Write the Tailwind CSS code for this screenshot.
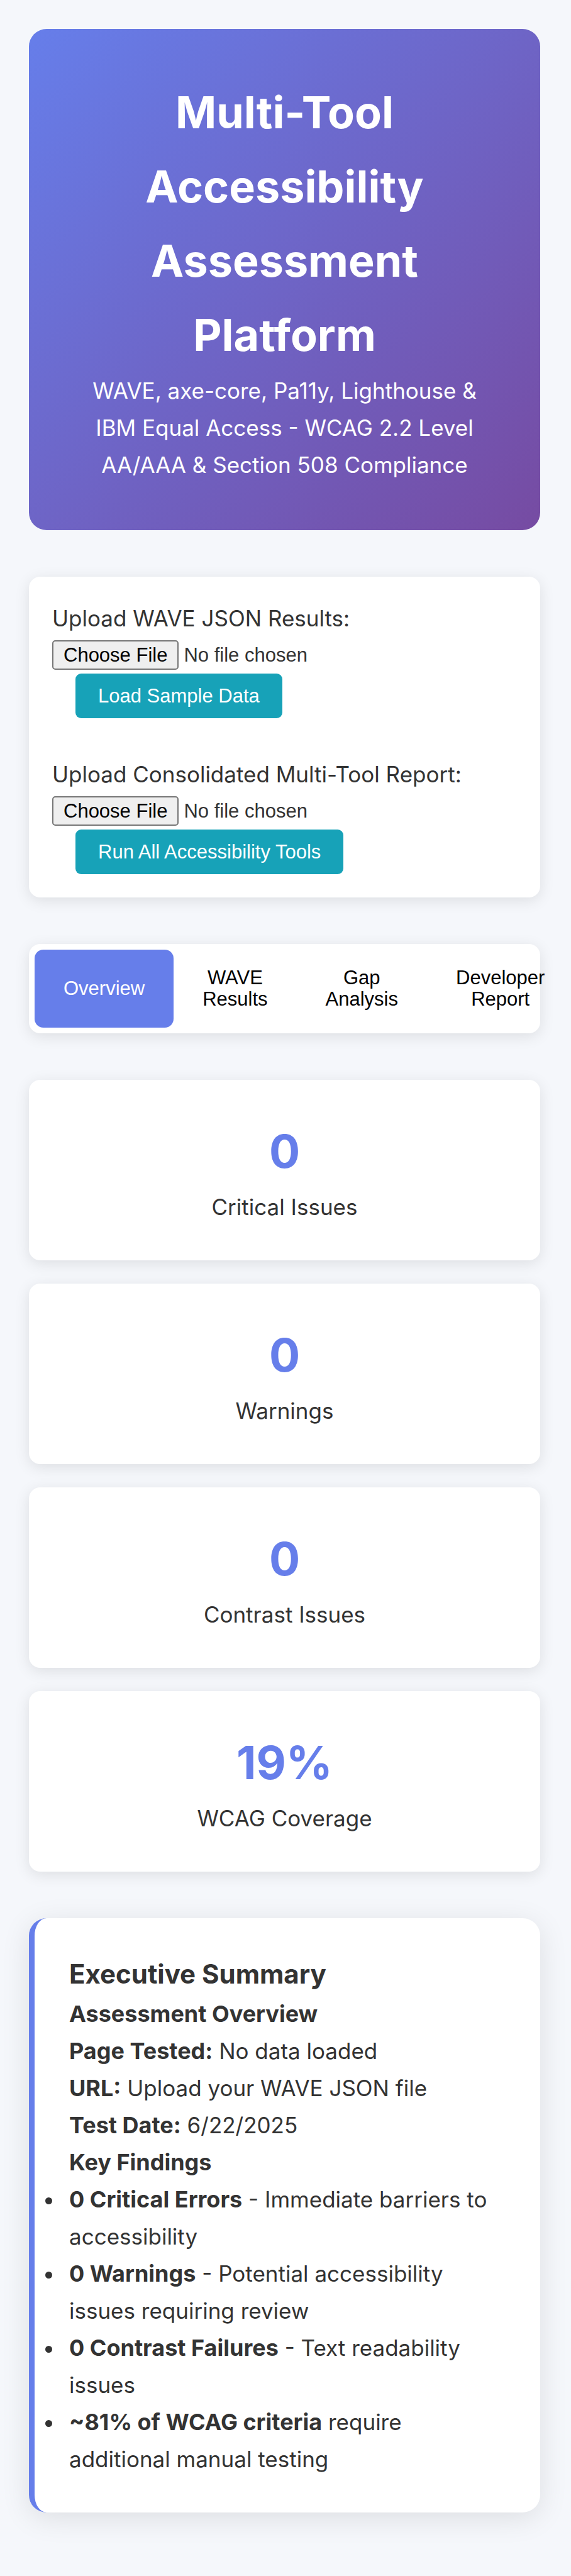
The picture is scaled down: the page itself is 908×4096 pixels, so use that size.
<!DOCTYPE html>
<html lang="en">
<head>
<meta charset="utf-8">
<meta name="viewport" content="width=device-width, initial-scale=1">
<title>Multi-Tool Accessibility Assessment Platform</title>
<script src="https://cdn.jsdelivr.net/npm/@tailwindcss/browser@4"></script>
</head>
<body class="overflow-x-clip bg-[#f5f7fb] font-['Inter','Liberation_Sans',sans-serif] text-[35px] leading-[59px] text-[#333]">
<div class="flex flex-col gap-[74px] pt-[46px] pr-[49px] pb-[99px] pl-[46px]">

  <header class="rounded-[28px] bg-[linear-gradient(135deg,#667eea_0%,#764ba2_100%)] p-[74px] text-center text-white">
    <h1 class="text-[70px] leading-[118px] font-bold">Multi-Tool Accessibility Assessment Platform</h1>
    <p>WAVE, axe-core, Pa11y, Lighthouse &amp; IBM Equal Access - WCAG 2.2 Level AA/AAA &amp; Section 508 Compliance</p>
  </header>

  <section class="flex flex-col gap-[60px] rounded-[18px] bg-white p-[37px] shadow-[0_5px_23px_rgba(0,0,0,0.1)]">
    <div class="flex flex-col items-start">
      <label for="wave-file">Upload WAVE JSON Results:</label>
      <input id="wave-file" type="file" class="mt-[5px] h-[47px] max-w-full font-['Liberation_Sans',sans-serif] text-[31px] leading-[35px] file:mr-[8px] file:h-[47px] file:rounded-[5px] file:border-2 file:border-solid file:border-[#767676] file:bg-[#efefef] file:px-[16px] file:text-black">
      <button type="button" class="mt-[6px] ml-[37px] rounded-[9px] bg-[#17a2b8] px-[36px] py-[18px] font-['Liberation_Sans',sans-serif] text-[31px] leading-[35px] text-white">Load Sample Data</button>
    </div>
    <div class="flex flex-col items-start">
      <label for="report-file">Upload Consolidated Multi-Tool Report:</label>
      <input id="report-file" type="file" class="mt-[5px] h-[47px] max-w-full font-['Liberation_Sans',sans-serif] text-[31px] leading-[35px] file:mr-[8px] file:h-[47px] file:rounded-[5px] file:border-2 file:border-solid file:border-[#767676] file:bg-[#efefef] file:px-[16px] file:text-black">
      <button type="button" class="mt-[6px] ml-[37px] rounded-[9px] bg-[#17a2b8] px-[36px] py-[18px] font-['Liberation_Sans',sans-serif] text-[31px] leading-[35px] text-white">Run All Accessibility Tools</button>
    </div>
  </section>

  <nav class="flex rounded-[18px] bg-white p-[9px] font-['Liberation_Sans',sans-serif] text-[31px] leading-[34px] text-black shadow-[0_5px_23px_rgba(0,0,0,0.1)]">
    <button type="button" class="flex-1 rounded-[14px] bg-[#667eea] px-[46px] py-[28px] text-white">Overview</button>
    <button type="button" class="flex-1 rounded-[14px] px-[46px] py-[28px]">WAVE Results</button>
    <button type="button" class="flex-1 rounded-[14px] px-[46px] py-[28px]">Gap Analysis</button>
    <button type="button" class="flex-1 rounded-[14px] px-[46px] py-[28px]">Developer Report</button>
  </nav>

  <section class="grid gap-[37px] text-center">
    <div class="rounded-[18px] bg-white p-[55px] shadow-[0_5px_23px_rgba(0,0,0,0.1)]">
      <div class="text-[73px] leading-[118px] font-bold text-[#667eea]">0</div>
      <div>Critical Issues</div>
    </div>
    <div class="rounded-[18px] bg-white p-[55px] shadow-[0_5px_23px_rgba(0,0,0,0.1)]">
      <div class="text-[73px] leading-[118px] font-bold text-[#667eea]">0</div>
      <div>Warnings</div>
    </div>
    <div class="rounded-[18px] bg-white p-[55px] shadow-[0_5px_23px_rgba(0,0,0,0.1)]">
      <div class="text-[73px] leading-[118px] font-bold text-[#667eea]">0</div>
      <div>Contrast Issues</div>
    </div>
    <div class="rounded-[18px] bg-white p-[55px] shadow-[0_5px_23px_rgba(0,0,0,0.1)]">
      <div class="text-[73px] leading-[118px] font-bold text-[#667eea]">19%</div>
      <div>WCAG Coverage</div>
    </div>
  </section>

  <section class="rounded-[28px] border-l-[9px] border-[#667eea] bg-white p-[55px] shadow-[0_9px_46px_rgba(0,0,0,0.1)]">
    <h2 class="text-[42px] leading-[68px] font-bold">Executive Summary</h2>
    <h3 class="text-[36px] leading-[59px] font-bold">Assessment Overview</h3>
    <p><strong class="text-[36px] leading-[59px]">Page Tested:</strong> No data loaded</p>
    <p><strong class="text-[36px] leading-[59px]">URL:</strong> Upload your WAVE JSON file</p>
    <p><strong class="text-[36px] leading-[59px]">Test Date:</strong> 6/22/2025</p>
    <h3 class="text-[36px] leading-[59px] font-bold">Key Findings</h3>
    <ul class="-ml-[9px] list-outside list-disc">
      <li class="pl-[9px]"><strong class="text-[36px] leading-[59px]">0 Critical Errors</strong> - Immediate barriers to accessibility</li>
      <li class="pl-[9px]"><strong class="text-[36px] leading-[59px]">0 Warnings</strong> - Potential accessibility issues requiring review</li>
      <li class="pl-[9px]"><strong class="text-[36px] leading-[59px]">0 Contrast Failures</strong> - Text readability issues</li>
      <li class="pl-[9px]"><strong class="text-[36px] leading-[59px]">~81% of WCAG criteria</strong> require additional manual testing</li>
    </ul>
  </section>

</div>
</body>
</html>
